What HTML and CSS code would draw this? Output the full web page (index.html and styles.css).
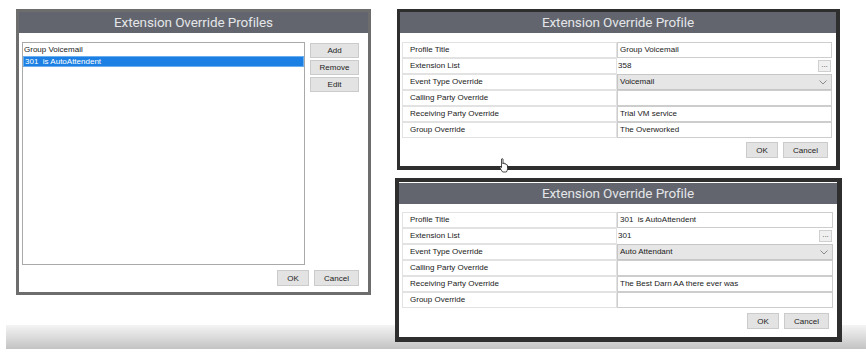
FILE: index.html
```html
<!DOCTYPE html>
<html lang="en">
<head>
  <meta charset="UTF-8" />
  <title>Extension Override Profiles</title>
  <link rel="stylesheet" href="styles.css">
</head>
<body>
  <div class="desk">
    <div class="win win-list">
      <div class="win-title">Extension Override Profiles</div>
      <div class="list-body">
        <div class="list-row">
          <ul class="listbox">
            <li>Group Voicemail</li>
            <li class="selected">301&nbsp; is AutoAttendent</li>
          </ul>
          <div class="side-btns">
            <button class="btn">Add</button>
            <button class="btn">Remove</button>
            <button class="btn">Edit</button>
          </div>
        </div>
        <div class="footer">
          <button class="btn btn-ok">OK</button>
          <button class="btn btn-cancel">Cancel</button>
        </div>
      </div>
    </div>

    <div class="col">
      <div class="win win-dark">
        <div class="win-title">Extension Override Profile</div>
        <div class="form-body">
          <div class="grid">
            <div class="lbl">Profile Title</div>
            <div class="fld">Group Voicemail</div>
            <div class="lbl">Extension List</div>
            <div class="fld fld-plain">358<span class="dots">...</span></div>
            <div class="lbl">Event Type Override</div>
            <div class="fld fld-combo">Voicemail
              <svg class="chev" width="8" height="5" viewBox="0 0 8 5"><path d="M0.5 0.5 L4 4 L7.5 0.5" fill="none" stroke="#8a8a8a" stroke-width="1"/></svg>
            </div>
            <div class="lbl">Calling Party Override</div>
            <div class="fld"></div>
            <div class="lbl">Receiving Party Override</div>
            <div class="fld">Trial VM service</div>
            <div class="lbl">Group Override</div>
            <div class="fld">The Overworked</div>
          </div>
          <div class="footer">
            <button class="btn btn-ok">OK</button>
            <button class="btn btn-cancel">Cancel</button>
          </div>
        </div>
      </div>

      <div class="win win-dark win-wide">
        <div class="win-title">Extension Override Profile</div>
        <div class="form-body">
          <div class="grid">
            <div class="lbl">Profile Title</div>
            <div class="fld">301&nbsp; is AutoAttendent</div>
            <div class="lbl">Extension List</div>
            <div class="fld fld-plain">301<span class="dots">...</span></div>
            <div class="lbl">Event Type Override</div>
            <div class="fld fld-combo">Auto Attendant
              <svg class="chev" width="8" height="5" viewBox="0 0 8 5"><path d="M0.5 0.5 L4 4 L7.5 0.5" fill="none" stroke="#8a8a8a" stroke-width="1"/></svg>
            </div>
            <div class="lbl">Calling Party Override</div>
            <div class="fld"></div>
            <div class="lbl">Receiving Party Override</div>
            <div class="fld">The Best Darn AA there ever was</div>
            <div class="lbl">Group Override</div>
            <div class="fld"></div>
          </div>
          <div class="footer">
            <button class="btn btn-ok">OK</button>
            <button class="btn btn-cancel">Cancel</button>
          </div>
        </div>
      </div>
    </div>

    <!-- mouse pointer sitting over the desktop -->
    <svg class="cursor" width="10" height="15" viewBox="0 0 10 15">
      <path d="M2.5 1 Q3.5 0.3 4 1 L4 6 L4.3 5.2 Q5 4.6 5.6 5.3 L5.7 6 Q6.4 5.4 7 6.1 L7.1 6.8 Q7.8 6.3 8.4 7 L8.6 10.5 Q8.4 12.6 7.4 14 L3.6 14 Q2.2 12.2 1 10 Q0.6 9 1.4 8.8 L2.5 9.6 Z" fill="#fff" stroke="#222" stroke-width="0.8"/>
    </svg>
  </div>
</body>
</html>
```

FILE: styles.css
```css
* {
  box-sizing: border-box;
}
body {
  margin: 0;
  background: #fff;
  font-family: "Liberation Sans", Arial, sans-serif;
  font-size: 8px;
  color: #1a1a1a;
}
.desk {
  position: relative;
  display: flex;
  align-items: flex-start;
  width: 866px;
  height: 359px;
  padding: 9px 0 0 16px;
  background: linear-gradient(#f4f4f4, #c3c3c3) no-repeat 6px 325px / 860px 24px;
}
.win {
  background: #fff;
}
.win-title {
  height: 21px;
  background: #62656e;
  color: #e4e5e8;
  font-family: Roboto, "Liberation Sans", sans-serif;
  font-size: 13.5px;
  line-height: 21px;
  text-align: center;
  letter-spacing: -0.1px;
}
.btn {
  height: 16px;
  padding: 0;
  background: #e3e3e3;
  border: 1px solid #cbcbcb;
  font-family: "Liberation Sans", Arial, sans-serif;
  font-size: 8px;
  color: #222;
  cursor: pointer;
}
.btn-ok {
  width: 32px;
}
.btn-cancel {
  width: 45px;
}
.footer {
  display: flex;
  justify-content: flex-end;
  gap: 5px;
}

/* profile list window */
.win-list {
  width: 355px;
  height: 286px;
  border: 3px solid #6d6d6d;
}
.list-body {
  padding: 9px 9px 0 3px;
}
.list-row {
  display: flex;
  gap: 5px;
}
.listbox {
  width: 283px;
  height: 223px;
  margin: 0;
  padding: 1px 0 0;
  list-style: none;
  border: 1px solid #a9a9a9;
}
.listbox li {
  height: 11.5px;
  line-height: 11px;
  padding-left: 1px;
}
.listbox .selected {
  background: #1b7fe3;
  color: #fff;
  border: 1px solid #6aaef0;
  line-height: 9px;
}
.side-btns {
  display: flex;
  flex-direction: column;
  gap: 2px;
  width: 49px;
  padding-top: 1px;
}
.side-btns .btn {
  height: 15px;
}
.win-list .footer {
  margin-top: 5px;
}

/* profile editor windows */
.col {
  display: flex;
  flex-direction: column;
  gap: 8px;
  margin-left: 26px;
}
.win-dark {
  width: 443px;
  border: 3px solid #2e2e2e;
  border-right-width: 4px;
  border-bottom-width: 4px;
}
.win-wide {
  width: 447px;
  margin-left: -2px;
  border-width: 4px 5px 5px 4px;
  padding-top: 1px;
}
.form-body {
  padding: 9px 4px 8px 2px;
}
.win-wide .form-body {
  padding: 8px 4px 8px 3px;
}
.grid {
  display: grid;
  grid-template-columns: 215px 1fr;
  grid-auto-rows: 16px;
}
.lbl {
  border: 1px solid #e2e2e2;
  padding-left: 7px;
  line-height: 14px;
  white-space: nowrap;
}
.fld {
  position: relative;
  border: 1px solid #cdcdcd;
  padding-left: 2px;
  line-height: 14px;
  white-space: nowrap;
}
.fld-plain {
  border-color: #fff;
  padding-left: 0;
}
.fld-combo {
  background: #e6e6e6;
  border-color: #c6c6c6;
}
.dots {
  position: absolute;
  right: 0;
  top: 1px;
  width: 13px;
  height: 12px;
  border: 1px solid #cfcfcf;
  background: #f0f0f0;
  line-height: 8px;
  text-align: center;
  color: #555;
}
.chev {
  position: absolute;
  right: 4px;
  top: 5px;
}
.win-dark .footer {
  margin-top: 4px;
  padding-right: 4px;
}
.win-wide .footer {
  margin-top: 5px;
}
.cursor {
  position: absolute;
  left: 499px;
  top: 158px;
}
```
